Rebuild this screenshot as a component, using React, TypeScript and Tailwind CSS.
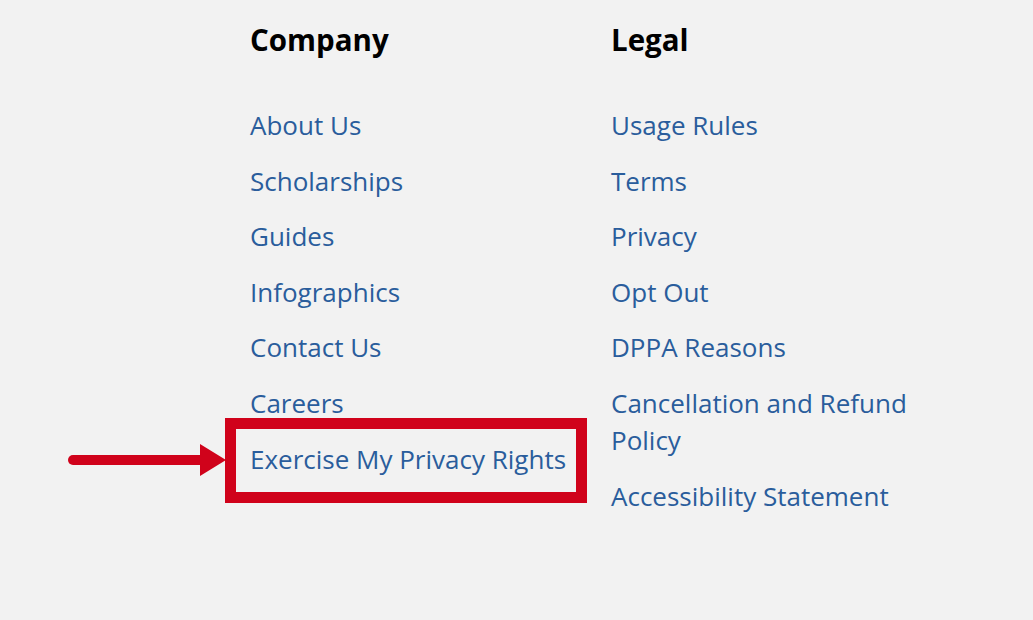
const company = ["About Us", "Scholarships", "Guides", "Infographics", "Contact Us", "Careers", "Exercise My Privacy Rights"];
const legal = ["Usage Rules", "Terms", "Privacy", "Opt Out", "DPPA Reasons", "Cancellation and Refund Policy", "Accessibility Statement"];

function Column({ title, links, width }: { title: string; links: string[]; width: string }) {
  return (
    <div className={width}>
      <h3 className="text-[29.5px] font-bold text-black leading-[40px]">{title}</h3>
      <ul className="mt-[47px] flex flex-col gap-[18.6px]">
        {links.map((l) => (
          <li key={l} className="text-[26px] leading-[37px] text-[#2a5d9c]">
            <a href="#">{l}</a>
          </li>
        ))}
      </ul>
    </div>
  );
}

export default function App() {
  return (
    <div className="relative w-[1033px] h-[620px] bg-[#f2f2f2] font-['Open_Sans',sans-serif] overflow-hidden">
      <div className="flex pl-[250px] pt-[20px]">
        <Column title="Company" links={company} width="w-[361px]" />
        <Column title="Legal" links={legal} width="w-[310px]" />
      </div>
      {/* annotation */}
      <div className="absolute left-[225px] top-[418px] w-[362px] h-[85px] border-[11px] border-[#d0021b]" />
      <svg className="absolute left-[60px] top-[440px]" width="170" height="40" viewBox="0 0 170 40">
        <line x1="13" y1="20" x2="145" y2="20" stroke="#d0021b" strokeWidth="10" strokeLinecap="round" />
        <polygon points="140,4 166,20 140,36" fill="#d0021b" />
      </svg>
    </div>
  );
}
